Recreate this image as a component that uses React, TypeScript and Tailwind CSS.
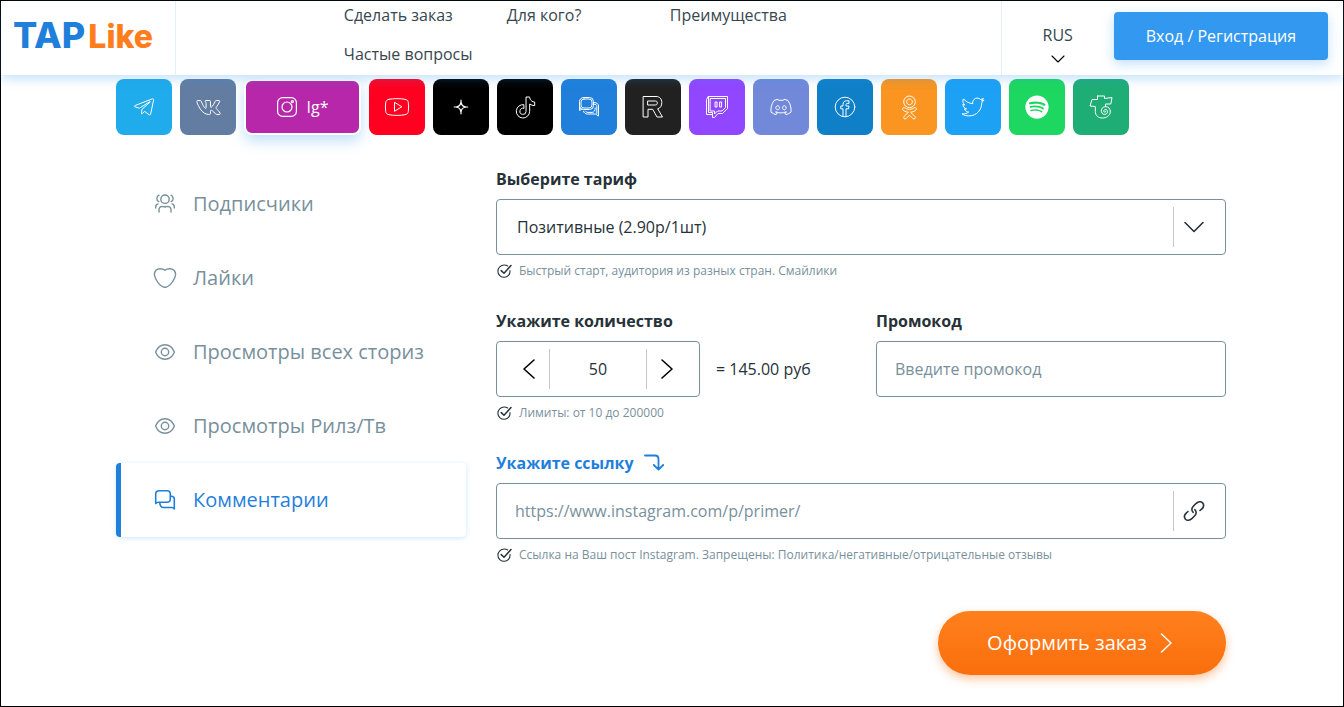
import { useState } from 'react';
import type { ReactNode } from 'react';
import {
  FaDiscord, FaOdnoklassniki, FaSpotify, FaTelegramPlane, FaTiktok, FaTwitter, FaVk,
} from 'react-icons/fa';

// Brand glyphs are drawn as thin outlines, except Spotify
const OUTLINE = 'overflow-visible [&_path]:[vector-effect:non-scaling-stroke]';
const outline = { className: OUTLINE, fill: 'none', strokeWidth: 1 };

// -------------------------------------------------------------
// Icons
// -------------------------------------------------------------
function Svg({ size = 24, sw = 1, children }: { size?: number; sw?: number; children: ReactNode }) {
  return (
    <svg
      width={size}
      height={size}
      viewBox={`0 0 ${size} ${size}`}
      fill="none"
      stroke="currentColor"
      strokeWidth={sw}
      strokeLinecap="round"
      strokeLinejoin="round"
      aria-hidden="true"
      className="shrink-0 overflow-visible"
    >
      {children}
    </svg>
  );
}

const Instagram = () => (
  <Svg size={20} sw={1.2}>
    <rect x="0.6" y="0.6" width="18.8" height="18.8" rx="5" />
    <circle cx="10" cy="10" r="5" />
    <circle cx="15.4" cy="4.6" r="1" />
  </Svg>
);

const Youtube = () => (
  <Svg>
    <path d="M4 4.3C8 3.4 16 3.4 20 4.3C22 4.6 23.2 5.8 23.3 7.6C23.7 10.5 23.7 13.5 23.3 16.4C23.2 18.2 22 19.4 20 19.7C16 20.6 8 20.6 4 19.7C2 19.4.8 18.2.7 16.4C.3 13.5.3 10.5.7 7.6C.8 5.8 2 4.6 4 4.3Z" />
    <path d="M9.5 7.7V16.3L16.5 12Z" />
  </Svg>
);

const Zen = () => (
  <Svg sw={1.2}>
    <path d="M12 7.6C12.5 9.8 14.2 11.5 16.4 12C14.2 12.5 12.5 14.2 12 16.4C11.5 14.2 9.8 12.5 7.6 12C9.8 11.5 11.5 9.8 12 7.6Z" />
    <path d="M12 5.2V8M12 16V18.8M5.2 12H8M16 12H18.8" />
  </Svg>
);

const Likee = () => (
  <Svg sw={1}>
    <rect x="2.5" y="2.5" width="14" height="12" rx="4" />
    <rect x="4" y="4" width="11" height="9" rx="3" />
    <path d="M2.5 9V15.5L5 14" />
    <path d="M17 7.5C20 7.5 21.5 9 21.5 11V21L18.5 19H10.5C8.5 19 7 18 6.5 16.2M17 9.2C19 9.2 19.8 10 19.8 11.5V18.3M8.5 16.2C9 17 9.8 17.4 11 17.4H15C17.3 17.4 18.2 15.5 18.2 13" />
  </Svg>
);

const Rutube = () => (
  <Svg>
    <path d="M2.5 1.5H15C18.7 1.5 20.8 3.8 20.8 7.5C20.8 11 19.2 13.2 16.7 13.8L21.5 22H16L11.7 14.3H7V22H2.5Z" />
    <path d="M7 6H14.3C15.7 6 16.3 6.6 16.3 7.9C16.3 9.3 15.7 10 14.3 10H7Z" />
  </Svg>
);

const Twitch = () => (
  <Svg>
    <path d="M3.5 1.5H22.5V13.5L17.5 18.5H13L9.5 22.5H7.5V19.5H1.5V5Z" />
    <path d="M5.5 3.5H20.5V12.5L17 16H12.5L9.5 19V16H5.5ZM3.5 1.5V17.5H7.5V19.5" />
    <path d="M10.5 7H12V12H10.5ZM15 7H16.5V12H15Z" />
  </Svg>
);

const Facebook = () => (
  <Svg>
    <circle cx="12" cy="12" r="9.8" />
    <path d="M10 21.5V13.8H7.8V11H10V9.5C10 7 11.3 5.8 13.6 5.8H16V8.5H14.2C13.3 8.5 13 9 13 9.8V11H16L15.5 13.8H13V21.5" />
  </Svg>
);

const Trovo = () => (
  <Svg>
    <path d="M8.5 1H15.5V3.5L23 2.5L21.8 9H16.5V11.5M8.5 1V4.5H3L1 11L6.3 11.5V16.5C6.3 20.4 9.2 23 13.2 23C17.5 23 20.8 20.8 21.3 17C21.6 13.7 19.3 11.5 16.5 11.6C13.6 11.8 12 14 12.4 16.5C12.8 19 15 20 17 19.1C19.2 18 19 14.8 16.8 14.4C15 14.3 14.2 16.2 15.3 17.1C16.3 17.6 17 16.9 16.7 16.2" />
  </Svg>
);

const Followers = () => (
  <Svg size={20} sw={1.4}>
    <circle cx="10" cy="5.2" r="4.2" />
    <path d="M4 18V15.8C4 13.7 5.5 12.4 8 12.4L10 13L12 12.4C14.5 12.4 16 13.7 16 15.8V18" />
    <path d="M4 1.2C1.2 2.4 1.2 6.5 3.8 7.6M16 1.2C18.8 2.4 18.8 6.5 16.2 7.6M.7 14V13C.7 11.3 1.6 10.2 3 9.9M19.3 14V13C19.3 11.3 18.4 10.2 17 9.9" />
  </Svg>
);

const Heart = () => (
  <Svg size={20} sw={1.4}>
    <path d="M10 2.3C7.3.1 3.3.2 1 2.3C-.8 4.4-.8 8 .7 10.7C2.7 14.6 6 18.2 8.7 19.1C9.6 19.4 10.4 19.4 11.3 19.1C14 18.2 17.3 14.6 19.3 10.7C20.8 8 20.8 4.4 19 2.3C16.7.2 12.7.1 10 2.3Z" />
  </Svg>
);

const Eye = () => (
  <Svg size={20} sw={1.4}>
    <path d="M.6 10C2.5 5.3 6 2.8 10 2.8S17.5 5.3 19.4 10C17.5 14.7 14 17.2 10 17.2S2.5 14.7.6 10Z" />
    <circle cx="10" cy="10" r="3.7" />
  </Svg>
);

const Comments = () => (
  <Svg size={20} sw={1.6}>
    <path d="M.7 13.5V4C.7 2 2 .7 4 .7H12C14 .7 15.3 2 15.3 4V9C15.3 11 14 12.3 12 12.3H3.5C2 12.3 1.2 12.7.7 13.5Z" />
    <path d="M15.5 6.2H16.3C18.3 6.2 19.3 7.4 19.3 9V19C18.9 18 18 17.5 16.7 17.5H8.5C6.3 17.5 5 16.3 4.7 12.5" />
  </Svg>
);

const CheckMark = () => (
  <Svg size={16} sw={1.1}>
    <path d="M14 7.5C14.3 11.5 11.7 14.3 8.3 14.3C4.7 14.3 1.9 11.7 1.9 8.2C1.9 4.7 4.7 2 8.2 2C9.5 2 10.7 2.3 11.7 3" />
    <path d="M5.2 7.6L8 10.3L15 2.6" strokeWidth="1.5" />
  </Svg>
);

const LinkIcon = () => (
  <Svg size={20} sw={1.6}>
    <path d="M9.2 11.3C7.2 9.6 7.6 7 9.3 5.2L12.2 2.3C14.3.3 17 .2 18.5 1.8C20 3.5 19.7 6 17.8 7.9L16 9.5" />
    <path d="M10.8 8.7C12.8 10.4 12.4 13 10.7 14.8L7.8 17.7C5.7 19.7 3 19.8 1.5 18.2C0 16.5.3 14 2.2 12.1L4 10.5" />
  </Svg>
);

const TurnArrow = () => (
  <Svg size={20} sw={1.8}>
    <path d="M1 2.5H11C13.5 2.5 14.5 4 14.5 6V16.5M9.8 12L14.5 16.7L19.2 12" />
  </Svg>
);

// -------------------------------------------------------------
// Data
// -------------------------------------------------------------
const NAV = ['Сделать заказ', 'Для кого?', 'Преимущества', 'Частые вопросы'];

const NETWORKS: { name: string; bg: string; icon: ReactNode; active?: boolean }[] = [
  { name: 'Telegram', bg: 'bg-[#1fabec]', icon: <FaTelegramPlane size={22} {...outline} /> },
  { name: 'VK', bg: 'bg-[#637da2]', icon: <FaVk size={25} {...outline} /> },
  { name: 'Ig*', bg: 'bg-[#b628a9]', icon: <Instagram />, active: true },
  { name: 'YouTube', bg: 'bg-[#ff0020]', icon: <Youtube /> },
  { name: 'Дзен', bg: 'bg-black', icon: <Zen /> },
  { name: 'TikTok', bg: 'bg-black', icon: <FaTiktok size={21} {...outline} /> },
  { name: 'Likee', bg: 'bg-[#1f7fdb]', icon: <Likee /> },
  { name: 'Rutube', bg: 'bg-[#212121]', icon: <Rutube /> },
  { name: 'Twitch', bg: 'bg-[#9146ff]', icon: <Twitch /> },
  { name: 'Discord', bg: 'bg-[#7289da]', icon: <FaDiscord size={22} {...outline} /> },
  { name: 'Facebook', bg: 'bg-[#0f7fc8]', icon: <Facebook /> },
  { name: 'Одноклассники', bg: 'bg-[#f99520]', icon: <FaOdnoklassniki size={23} {...outline} /> },
  { name: 'Twitter', bg: 'bg-[#1da1f5]', icon: <FaTwitter size={22} {...outline} /> },
  { name: 'Spotify', bg: 'bg-[#1ed760]', icon: <FaSpotify size={24} /> },
  { name: 'Trovo', bg: 'bg-[#1fad76]', icon: <Trovo /> },
];

const SERVICES = [
  { name: 'Подписчики', icon: <Followers /> },
  { name: 'Лайки', icon: <Heart /> },
  { name: 'Просмотры всех сториз', icon: <Eye /> },
  { name: 'Просмотры Рилз/Тв', icon: <Eye /> },
  { name: 'Комментарии', icon: <Comments />, active: true },
];

// -------------------------------------------------------------
// Parts
// -------------------------------------------------------------
function Header() {
  return (
    <header className="relative z-10 flex bg-white shadow-[0_4px_10px_rgba(51,153,240,0.28)]">
      <a
        href="#"
        className="flex w-[175px] shrink-0 items-center border-r border-[#e3f0fb] pb-1 pl-3 font-['Inter'] text-[36px] leading-10 font-extrabold text-[#1f7fdb]"
      >
        <span className="flex items-baseline gap-[3px]">
          TAP<span className="text-[32px] text-[#ff7d1a]">Like</span>
        </span>
      </a>
      <nav className="grid flex-1 grid-cols-[repeat(3,163px)] content-start justify-center gap-y-[15px] pt-0.5 pb-2">
        {NAV.map(item => (
          <a key={item} href="#" className="leading-6 text-[#37474f]">{item}</a>
        ))}
      </nav>
      <div className="flex shrink-0 items-center border-l border-[#e3f0fb] pr-[15px]">
        <button type="button" className="flex w-28 flex-col items-center gap-1 pt-3 leading-6 text-[#37474f]">
          RUS
          <Svg size={14} sw={1.1}>
            <path d="M1 5L7 11L13 5" className="stroke-black" />
          </Svg>
        </button>
        <a
          href="#"
          className="mt-[11px] mb-[15px] flex h-12 items-center rounded bg-[#3399f0] px-8 font-medium text-white shadow-[0_4px_12px_rgba(51,153,240,0.3)]"
        >
          Вход / Регистрация
        </a>
      </div>
    </header>
  );
}

function Hint({ children }: { children: ReactNode }) {
  return (
    <p className="mt-2 flex items-center gap-[7px] text-xs leading-4 text-[#78909c]">
      <span className="text-[#263238]"><CheckMark /></span>
      {children}
    </p>
  );
}

const FIELD = 'flex h-14 items-center rounded border border-[#78909c] bg-white';
const LABEL = 'mb-2 flex items-center gap-2.5 leading-6 font-bold';

function OrderForm() {
  const [count, setCount] = useState(50);

  return (
    <form className="flex min-w-0 flex-1 flex-col text-[#263238]" onSubmit={e => e.preventDefault()}>
      <label htmlFor="tariff" className={LABEL}>Выберите тариф</label>
      <div className={`${FIELD} relative`}>
        <select id="tariff" className="h-full w-full appearance-none rounded bg-transparent pl-5 outline-none">
          <option>Позитивные (2.90р/1шт)</option>
        </select>
        <span className="pointer-events-none absolute right-0 flex h-10 w-[52px] items-center border-l border-[#c4c8ca] pl-2.5">
          <Svg size={20} sw={1.6}>
            <path d="M1 5.5L10 14.5L19 5.5" />
          </Svg>
        </span>
      </div>
      <Hint>Быстрый старт, аудитория из разных стран. Смайлики</Hint>

      <div className="mt-[30px] grid grid-cols-2 gap-[30px]">
        <div>
          <label htmlFor="count" className={LABEL}>Укажите количество</label>
          <div className="flex items-center gap-4">
            <div className={FIELD}>
              <button
                type="button"
                aria-label="Меньше"
                className="flex h-10 w-[53px] items-center justify-end border-r border-[#c4c8ca] pr-2.5 text-black"
                onClick={() => setCount(c => Math.max(10, c - 10))}
              >
                <Svg size={20} sw={1.6}>
                  <path d="M15 1L5 10L15 19" />
                </Svg>
              </button>
              <input
                id="count"
                inputMode="numeric"
                value={count}
                onChange={e => setCount(Number(e.target.value) || 0)}
                className="w-24 text-center outline-none"
              />
              <button
                type="button"
                aria-label="Больше"
                className="flex h-10 w-[53px] items-center border-l border-[#c4c8ca] pl-2.5 text-black"
                onClick={() => setCount(c => Math.min(200000, c + 10))}
              >
                <Svg size={20} sw={1.6}>
                  <path d="M5 1L15 10L5 19" />
                </Svg>
              </button>
            </div>
            <output htmlFor="count">= {(count * 2.9).toFixed(2)} руб</output>
          </div>
          <Hint>Лимиты: от 10 до 200000</Hint>
        </div>
        <div>
          <label htmlFor="promo" className={LABEL}>Промокод</label>
          <div className={FIELD}>
            <input
              id="promo"
              placeholder="Введите промокод"
              className="h-full w-full rounded pl-[18px] outline-none placeholder:text-[#78909c]"
            />
          </div>
        </div>
      </div>

      <label htmlFor="link" className={`${LABEL} mt-[30px] text-[#1f7fdb]`}>
        Укажите ссылку
        <TurnArrow />
      </label>
      <div className={FIELD}>
        <input
          id="link"
          placeholder="https://www.instagram.com/p/primer/"
          className="h-full min-w-0 flex-1 rounded pl-[18px] outline-none placeholder:text-[#78909c]"
        />
        <span className="flex h-10 w-[52px] items-center border-l border-[#c4c8ca] pl-2.5">
          <LinkIcon />
        </span>
      </div>
      <Hint>Ссылка на Ваш пост Instagram. Запрещены: Политика/негативные/отрицательные отзывы</Hint>

      <button
        type="submit"
        className="mt-12 flex h-16 w-72 items-center justify-center gap-2.5 self-end rounded-full bg-linear-to-b from-[#ff801c] to-[#fa6e0c] text-xl font-medium text-white shadow-[0_4px_10px_rgba(250,110,12,0.4)]"
      >
        Оформить заказ
        <Svg size={20} sw={1.5}>
          <path d="M4.5 1L14 10L4.5 19" />
        </Svg>
      </button>
    </form>
  );
}

export default function App() {
  return (
    <div className="min-h-screen border border-black bg-white font-['Open_Sans',sans-serif] text-base">
      <Header />
      <main className="mx-auto max-w-[1112px] pt-1 pr-0.5 pb-[30px]">
        <div className="flex flex-wrap gap-2">
          {NETWORKS.map(n => (
            <button
              key={n.name}
              type="button"
              aria-label={n.name}
              className={
                n.active
                  ? `flex h-14 w-[117px] items-center justify-center gap-2.5 rounded-lg border-2 border-white font-medium text-white shadow-[0_6px_14px_rgba(51,153,240,0.3)] ${n.bg}`
                  : `flex h-14 w-14 items-center justify-center rounded-lg text-white ${n.bg}`
              }
            >
              {n.icon}
              {n.active && n.name}
            </button>
          ))}
        </div>

        <div className="mt-8 flex gap-[30px]">
          <ul className="w-[350px] shrink-0 text-xl">
            {SERVICES.map(s => (
              <li key={s.name}>
                <a
                  href="#"
                  className={
                    s.active
                      ? 'flex h-[74px] items-center gap-[18px] rounded border-l-[5px] border-[#1f7fdb] pl-[34px] text-[#1f7fdb] shadow-[0_1px_5px_rgba(51,153,240,0.25)]'
                      : 'flex h-[74px] items-center gap-[18px] pl-[39px] text-[#78909c]'
                  }
                >
                  {s.icon}
                  {s.name}
                </a>
              </li>
            ))}
          </ul>
          <OrderForm />
        </div>
      </main>
    </div>
  );
}
